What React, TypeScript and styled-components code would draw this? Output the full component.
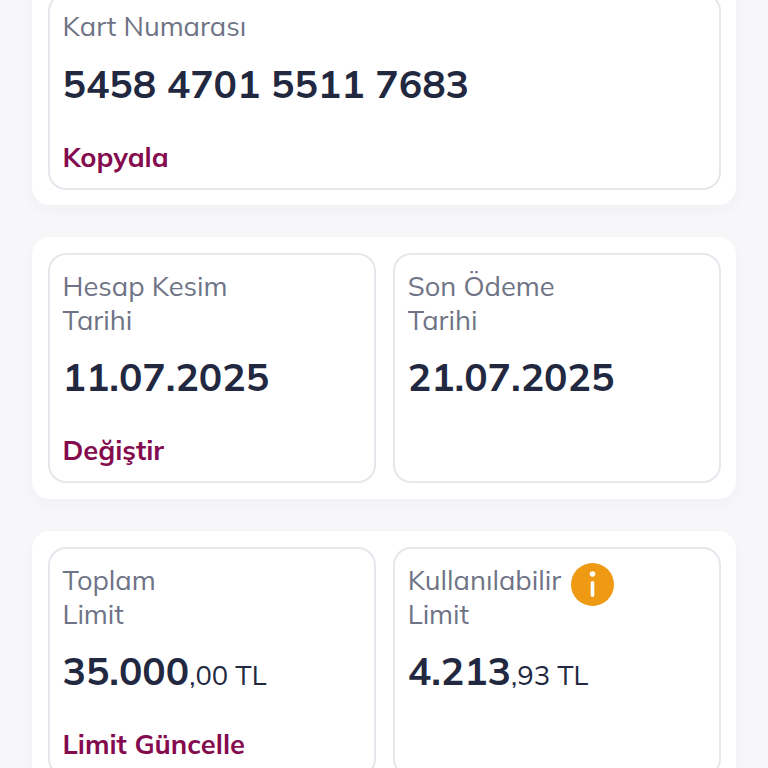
import React from 'react';
import styled, { createGlobalStyle } from 'styled-components';

const GlobalStyle = createGlobalStyle`
  html, body {
    margin: 0;
    padding: 0;
    height: 768px;
    overflow: hidden;
    background: #f7f7fa;
    font-family: "Mulish", "Muli", "Nunito", "Lato", "Noto Sans", sans-serif;
  }
`;

const Page = styled.div`
  width: 768px;
  box-sizing: border-box;
  padding: 0 32px;
  display: flex;
  flex-direction: column;
  gap: 32px;
  margin-top: -23px;
`;

const Section = styled.section<{ $bottom?: number }>`
  background: #fff;
  border-radius: 18px;
  padding: 16px 15px ${p => p.$bottom ?? 16}px 15.5px;
  display: flex;
  gap: 17px;
  flex-shrink: 0;
  box-shadow: 0 6px 14px rgba(40, 50, 80, 0.03);
`;

const Card = styled.div<{ $h: number }>`
  flex: 1;
  box-sizing: border-box;
  height: ${p => p.$h}px;
  border: 2px solid #e6e7ec;
  border-radius: 18px;
  padding: 14px 13px 0;
  display: flex;
  flex-direction: column;
`;

const Label = styled.div`
  font-size: 27.3px;
  line-height: 34px;
  color: #6e7385;
  display: flex;
  align-items: flex-start;
  gap: 10px;
`;

const Value = styled.div<{ $top?: number }>`
  margin-top: ${p => p.$top ?? 16}px;
  font-size: 39px;
  line-height: 48px;
  font-weight: 700;
  color: #22283f;
`;

const Small = styled.span`
  font-size: 27.3px;
  font-weight: 400;
`;

const Action = styled.div`
  margin-top: auto;
  margin-bottom: 14px;
  font-size: 27.3px;
  line-height: 34px;
  font-weight: 700;
  color: #850b4f;
`;

const InfoBadge = styled.svg`
  width: 43px;
  height: 43px;
  flex-shrink: 0;
`;

export default function App() {
  return (
    <>
      <GlobalStyle />
      <Page>
        <Section $bottom={15}>
          <Card $h={197}>
            <Label>Kart Numarası</Label>
            <Value $top={17}>5458 4701 5511 7683</Value>
            <Action>Kopyala</Action>
          </Card>
        </Section>
        <Section>
          <Card $h={230}>
            <Label>Hesap Kesim<br />Tarihi</Label>
            <Value>11.07.2025</Value>
            <Action>Değiştir</Action>
          </Card>
          <Card $h={230}>
            <Label>Son Ödeme<br />Tarihi</Label>
            <Value>21.07.2025</Value>
          </Card>
        </Section>
        <Section>
          <Card $h={230}>
            <Label>Toplam<br />Limit</Label>
            <Value>35.000<Small>,00 TL</Small></Value>
            <Action>Limit Güncelle</Action>
          </Card>
          <Card $h={230}>
            <Label>
              <span>Kullanılabilir<br />Limit</span>
              <InfoBadge viewBox="0 0 43 43">
                <circle cx="21.5" cy="21.5" r="21.5" fill="#ee9a12" />
                <circle cx="21.5" cy="11" r="2.8" fill="#fff" />
                <rect x="19.7" y="18" width="3.6" height="16" rx="1.8" fill="#fff" />
              </InfoBadge>
            </Label>
            <Value>4.213<Small>,93 TL</Small></Value>
          </Card>
        </Section>
      </Page>
    </>
  );
}
